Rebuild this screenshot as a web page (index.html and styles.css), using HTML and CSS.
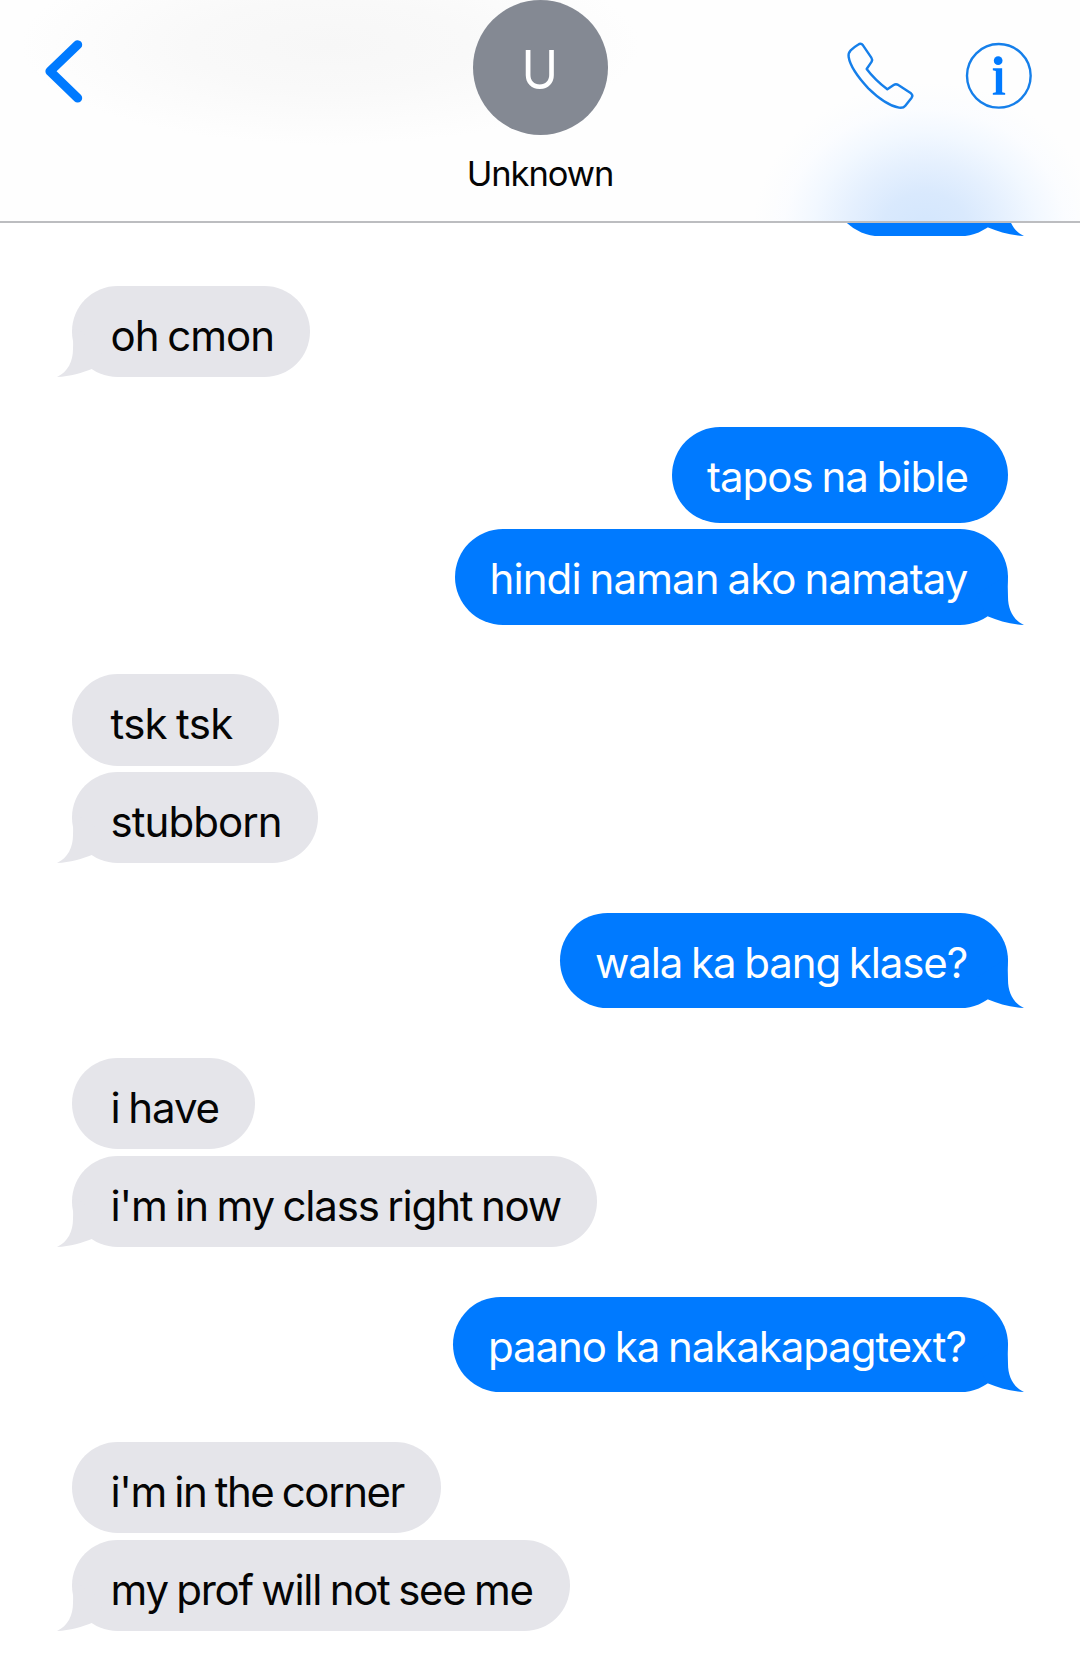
FILE: index.html
```
<!DOCTYPE html>
<html lang="tl">
<head>
<meta charset="utf-8">
<title>Unknown</title>
<link rel="stylesheet" href="styles.css">
</head>
<body>
<svg class="defs" width="0" height="0" aria-hidden="true">
  <symbol id="tail" viewBox="0 0 48 50">
    <path d="M0 20 L31.5 0 L32 22 C32 34 37 45 48 50 C35 49.5 23 46 11.5 41.3 Z"/>
  </symbol>
</svg>
<div class="screen">
  <header class="bar">
    <div class="side">
      <svg class="back" viewBox="0 0 40 64" fill="none" stroke="#007aff" stroke-width="9.2" stroke-linecap="round" stroke-linejoin="round">
        <path d="M33.6 5.8 L6 32.2 L33.6 59"/>
      </svg>
    </div>
    <div class="contact">
      <div class="avatar"><span>U</span></div>
      <div class="name">Unknown</div>
    </div>
    <div class="side actions">
      <svg class="icon" viewBox="255 120 215 215" fill="none" stroke="#157fea" stroke-width="7.2" stroke-linejoin="round">
        <path d="M294 134 Q303 128 309 136 L334 173 Q338 179 335 185 L320 207 Q344 239 382 268 L401 255 Q408 250 415 255 L453 280 Q460 286 455 293 L436 317 Q430 325 417 323 Q376 315 325 265 Q272 208 266 171 Q264 159 272 151 Q282 141 294 134 Z"/>
      </svg>
      <svg class="icon" viewBox="609.5 120 215 215">
        <circle cx="717" cy="227.5" r="95.5" fill="none" stroke="#157fea" stroke-width="7.2"/>
        <circle cx="715" cy="182" r="13" fill="#007aff"/>
        <path d="M699 205 H727 V277 L736 279 V284 H699 V279 L708 277 V213 L699 211 Z" fill="#007aff"/>
      </svg>
    </div>
  </header>
  <main class="thread">
    <div class="group sent clipped">
      <div class="bubble last"><svg class="tail"><use href="#tail"/></svg></div>
    </div>
    <div class="group received">
      <div class="bubble last m-cmon">oh cmon<svg class="tail"><use href="#tail"/></svg></div>
    </div>
    <div class="group sent">
      <div class="bubble m-tapos">tapos na bible</div>
      <div class="bubble last m-hindi">hindi naman ako namatay<svg class="tail"><use href="#tail"/></svg></div>
    </div>
    <div class="group received">
      <div class="bubble m-tsk">tsk tsk</div>
      <div class="bubble last m-stubborn">stubborn<svg class="tail"><use href="#tail"/></svg></div>
    </div>
    <div class="group sent">
      <div class="bubble last m-wala">wala ka bang klase?<svg class="tail"><use href="#tail"/></svg></div>
    </div>
    <div class="group received">
      <div class="bubble m-have">i have</div>
      <div class="bubble last m-class">i'm in my class right now<svg class="tail"><use href="#tail"/></svg></div>
    </div>
    <div class="group sent">
      <div class="bubble last m-paano">paano ka nakakapagtext?<svg class="tail"><use href="#tail"/></svg></div>
    </div>
    <div class="group received">
      <div class="bubble m-corner">i'm in the corner</div>
      <div class="bubble last m-prof">my prof will not see me<svg class="tail"><use href="#tail"/></svg></div>
    </div>
  </main>
</div>
</body>
</html>
```
FILE: styles.css
```
* { box-sizing: border-box; }

body {
  margin: 0;
  background: #fff;
  color: #050505;
  font-family: Inter, "Liberation Sans", sans-serif;
}

.defs { position: absolute; }

.screen {
  display: flex;
  flex-direction: column;
  width: 1080px;
  height: 1666px;
  overflow: hidden;
}

/* Header */
.bar {
  display: grid;
  grid-template-columns: 1fr 200px 1fr;
  flex: none;
  height: 223px;
  border-bottom: 2px solid #bcbdc0;
  background:
    radial-gradient(ellipse 172px 148px at 925px 230px, #d3e6fd 0%, #d9e9fd 25%, #e5f0fe 45%, #f2f8ff 65%, rgba(250, 252, 255, .8) 82%, rgba(254, 254, 254, 0) 100%),
    radial-gradient(ellipse 310px 100px at 330px 45px, #f7f7f7 0%, #f9f9f9 45%, rgba(254, 254, 254, 0) 100%),
    #fefefe;
}

.side { padding: 39px 0 0 44px; }

.back { display: block; width: 40px; height: 64px; }

.contact {
  display: flex;
  flex-direction: column;
  align-items: center;
}

.avatar {
  width: 135px;
  height: 135px;
  margin-top: -.5px;
  border-radius: 50%;
  background: #848993;
  color: #fff;
  font-size: 53.5px;
  line-height: 139px;
  text-align: center;
}

.avatar span { display: inline-block; transform: scaleX(.92); }

.name {
  margin-top: 18.5px;
  font-size: 34.5px;
  line-height: 42px;
  letter-spacing: -1.05px;
}

.actions {
  display: flex;
  justify-content: flex-end;
  gap: 46.5px;
  padding: 40px 45px 0 0;
}

.icon { width: 71.67px; height: 71.67px; }

/* Conversation */
.thread {
  display: flex;
  flex-direction: column;
  gap: 49.65px;
  flex: 1;
  overflow: hidden;
}

.group {
  display: flex;
  flex-direction: column;
  gap: 6.3px;
  padding: 0 72px;
}

.sent { align-items: flex-end; }
.received { align-items: flex-start; }

.bubble {
  position: relative;
  padding-top: 24.2px;
  font-size: 42px;
  line-height: 51px;
  word-spacing: -2px;
  white-space: nowrap;
}

.sent .bubble {
  height: 95.7px;
  padding-left: 35px;
  border-radius: 48px;
  background: #007aff;
  color: #fff;
}

.received .bubble {
  height: 91.3px;
  padding-left: 38.5px;
  border-radius: 45.7px;
  background: #e5e5ea;
}

.tail {
  position: absolute;
  right: -16px;
  bottom: 0;
  width: 48px;
  height: 50px;
  fill: #007aff;
}

.received .tail {
  right: auto;
  left: -15px;
  fill: #e5e5ea;
  transform: scaleX(-1);
}

/* Sent message scrolled under the header */
.clipped { margin-top: -82.35px; }
.clipped .bubble { width: 176px; }

/* Bubble widths and tracking */
.m-cmon { width: 238px; letter-spacing: -1px; }
.m-tapos { width: 336px; letter-spacing: -1px; }
.m-hindi { width: 553.5px; letter-spacing: -.91px; }
.m-tsk { width: 207px; letter-spacing: -.7px; }
.m-stubborn { width: 246px; letter-spacing: -.95px; }
.m-wala { width: 448px; letter-spacing: -1.1px; }
.m-have { width: 182.5px; letter-spacing: -1.1px; }
.m-class { width: 525px; letter-spacing: -1.18px; }
.m-paano { width: 555px; letter-spacing: -1.07px; }
.m-corner { width: 369px; letter-spacing: -1.43px; }
.m-prof { width: 498px; letter-spacing: -1.27px; }
```
